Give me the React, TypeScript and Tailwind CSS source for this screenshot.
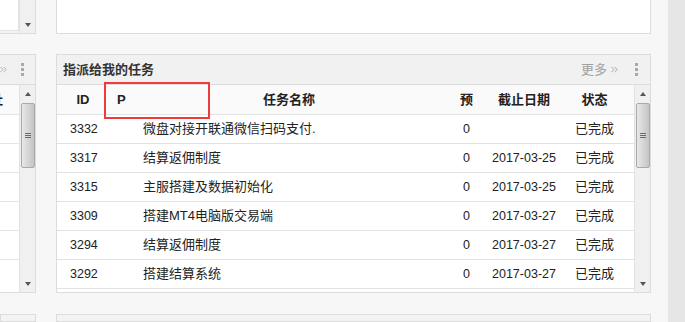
import { ChevronsRight } from 'lucide-react';

interface Task {
  id: number;
  name: string;
  p: number;
  due: string;
  status: string;
}

const tasks: Task[] = [
  { id: 3332, name: '微盘对接开联通微信扫码支付.', p: 0, due: '', status: '已完成' },
  { id: 3317, name: '结算返佣制度', p: 0, due: '2017-03-25', status: '已完成' },
  { id: 3315, name: '主服搭建及数据初始化', p: 0, due: '2017-03-25', status: '已完成' },
  { id: 3309, name: '搭建MT4电脑版交易端', p: 0, due: '2017-03-27', status: '已完成' },
  { id: 3294, name: '结算返佣制度', p: 0, due: '2017-03-27', status: '已完成' },
  { id: 3292, name: '搭建结算系统', p: 0, due: '2017-03-27', status: '已完成' },
];

const cols = 'grid grid-cols-[50px_23px_318px_37px_78px_70px]';

function MenuDots() {
  return (
    <div className="flex flex-col gap-[2px]">
      <span className="w-[3px] h-[3px] bg-[#a8a8a8]" />
      <span className="w-[3px] h-[3px] bg-[#a8a8a8]" />
      <span className="w-[3px] h-[3px] bg-[#a8a8a8]" />
    </div>
  );
}

function Scrollbar({ thumb = true, up = true }: { thumb?: boolean; up?: boolean }) {
  return (
    <div className="w-[16px] h-full bg-[#f0f0f0] border-l border-[#e2e2e2] flex flex-col items-center">
      {up && (
        <div className="h-[17px] flex items-center justify-center">
          <span className="w-0 h-0 border-x-[3px] border-x-transparent border-b-[4px] border-b-[#555]" />
        </div>
      )}
      {thumb && (
        <div className="w-[14px] h-[65px] mt-[1px] rounded-[2px] border border-[#a9a9a9] bg-gradient-to-r from-[#e8e8e8] via-[#d6d6d6] to-[#c4c4c4] flex flex-col items-center justify-center gap-[1px]">
          <span className="w-[6px] h-px bg-[#6b6b6b]" />
          <span className="w-[6px] h-px bg-[#6b6b6b]" />
          <span className="w-[6px] h-px bg-[#6b6b6b]" />
        </div>
      )}
      <div className="flex-1" />
      <div className="h-[17px] flex items-center justify-center">
        <span className="w-0 h-0 border-x-[3px] border-x-transparent border-t-[4px] border-t-[#555]" />
      </div>
    </div>
  );
}

function LeftColumn() {
  return (
    <div className="w-[36px] flex flex-col overflow-hidden">
      <div className="h-[34px] flex justify-end">
        <div className="w-[200px] h-full border-r border-b border-[#dcdcdc] bg-[#f3f3f3] flex">
          <div className="flex-1 bg-white border-b border-r border-[#e4e4e4] mb-[2px]" />
          <div className="w-[16px]">
            <Scrollbar thumb={false} up={false} />
          </div>
        </div>
      </div>
      <div className="h-[20px]" />
      <div className="h-[239px] flex justify-end">
        <div className="w-[200px] h-full border border-[#dcdcdc] flex flex-col">
          <div className="h-[30px] bg-[#f1f1f1] border-b border-[#dcdcdc] flex items-center justify-end pr-[11px] gap-[12px] text-[#aaa]">
            <ChevronsRight size={11} strokeWidth={2} />
            <MenuDots />
          </div>
          <div className="flex-1 flex bg-white">
            <div className="flex-1 flex flex-col">
              <div className="h-[30px] border-b border-[#e2e2e2] bg-[#fafafa] flex items-center justify-end pr-[16px] text-[13px] font-bold text-[#222]">
                址
              </div>
              {[0, 1, 2, 3, 4].map(i => (
                <div key={i} className="h-[29px] border-b border-[#e6e6e6] bg-white" />
              ))}
            </div>
            <Scrollbar />
          </div>
        </div>
      </div>
      <div className="h-[21px]" />
      <div className="flex-1 flex justify-end">
        <div className="w-[200px] h-full border border-[#dcdcdc] bg-[#f3f3f3]" />
      </div>
    </div>
  );
}

function TaskPanel() {
  return (
    <div className="relative h-[239px] border border-[#dcdcdc] bg-white flex flex-col">
      <div className="h-[30px] bg-[#f1f1f1] border-b border-[#dcdcdc] flex items-center pl-[6px] pr-[12px]">
        <span className="text-[13px] font-bold text-[#333]">指派给我的任务</span>
        <div className="flex-1" />
        <span className="text-[13px] text-[#a0a0a0] flex items-center">
          更多
          <ChevronsRight size={11} strokeWidth={2} className="ml-[2px]" />
        </span>
        <div className="ml-[15px]">
          <MenuDots />
        </div>
      </div>
      <div className="flex-1 flex">
        <div className="flex-1 flex flex-col">
          <div className={`${cols} h-[30px] border-b border-[#e2e2e2] bg-[#fafafa] items-center text-[13px] font-bold text-[#222]`}>
            <span className="text-center pl-[2px]">ID</span>
            <span className="pl-[10px]">P</span>
            <span className="text-center">任务名称</span>
            <span className="text-center">预</span>
            <span className="text-center">截止日期</span>
            <span className="text-center pr-[7px]">状态</span>
          </div>
          {tasks.map(t => (
            <div key={t.id} className={`${cols} h-[29px] border-b border-[#e2e2e2] items-center text-[12.5px] text-[#222]`}>
              <span className="pl-[13px]">{t.id}</span>
              <span />
              <span className="pl-[13px] text-[13px]">{t.name}</span>
              <span className="text-center">{t.p}</span>
              <span className="text-center">{t.due}</span>
              <span className="text-center pr-[7px] text-[13px]">{t.status}</span>
            </div>
          ))}
        </div>
        <Scrollbar />
      </div>
      <div className="absolute left-[47px] top-[27px] w-[106px] h-[37px] border-2 border-[#ef3b3b]" />
    </div>
  );
}

export default function App() {
  return (
    <div className="w-[685px] h-[322px] overflow-hidden bg-[#f7f7f7] flex font-['Liberation_Sans','Noto_Sans_CJK_SC',sans-serif]">
      <LeftColumn />
      <div className="w-[20px]" />
      <div className="w-[595px] flex flex-col">
        <div className="h-[34px] bg-white border-l border-r border-b border-[#dcdcdc]" />
        <div className="h-[20px]" />
        <TaskPanel />
        <div className="h-[21px]" />
        <div className="flex-1 border border-[#dcdcdc] bg-[#f3f3f3]" />
      </div>
      <div className="flex-1" />
      <div className="w-[17px] bg-[#e6e6e6]" />
    </div>
  );
}
